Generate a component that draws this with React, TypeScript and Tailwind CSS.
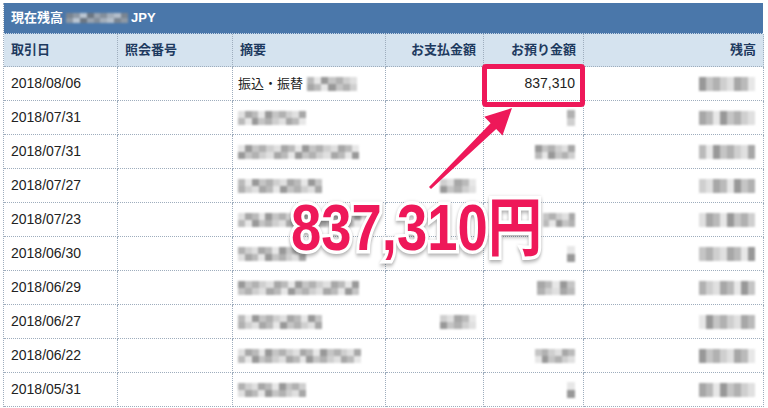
import React from "react";

const GRAYS = ["#8a8a8a", "#a4a4a4", "#c0c0c0", "#d6d6d6", "#b2b2b2", "#979797", "#e0e0e0", "#767676"];

function Blur({ w, seed = 1, h = 14 }: { w: number; seed?: number; h?: number }) {
  const cols = Math.max(1, Math.round(w / 7));
  const cells: string[] = [];
  let s = seed * 9301 + 49297;
  for (let i = 0; i < cols * 2; i++) {
    s = (s * 9301 + 49297) % 233280;
    cells.push(GRAYS[s % GRAYS.length]);
  }
  return (
    <div className="inline-grid blur-[1px] opacity-75" style={{ width: w, height: h, gridTemplateColumns: `repeat(${cols}, 1fr)` }}>
      {cells.map((c, i) => (
        <div key={i} style={{ background: c }} />
      ))}
    </div>
  );
}

type Row = {
  date: string;
  desc: React.ReactNode;
  pay?: number;
  dep?: React.ReactNode;
  bal: number;
};

const rows: Row[] = [
  { date: "2018/08/06", desc: (<span className="flex items-center gap-[4px]">振込・振替<Blur w={50} seed={3} /></span>), dep: <span>837,310</span>, bal: 3 },
  { date: "2018/07/31", desc: <Blur w={68} seed={5} />, dep: <Blur w={8} seed={7} h={16} />, bal: 4 },
  { date: "2018/07/31", desc: <Blur w={121} seed={8} />, dep: <Blur w={40} seed={9} />, bal: 5 },
  { date: "2018/07/27", desc: <Blur w={84} seed={11} />, pay: 12, bal: 6 },
  { date: "2018/07/23", desc: <Blur w={123} seed={13} />, dep: <Blur w={32} seed={14} />, bal: 7 },
  { date: "2018/06/30", desc: <Blur w={68} seed={15} />, dep: <Blur w={8} seed={16} h={16} />, bal: 8 },
  { date: "2018/06/29", desc: <Blur w={121} seed={17} />, dep: <Blur w={38} seed={18} />, bal: 9 },
  { date: "2018/06/27", desc: <Blur w={84} seed={19} />, pay: 20, bal: 10 },
  { date: "2018/06/22", desc: <Blur w={123} seed={21} />, dep: <Blur w={40} seed={22} />, bal: 11 },
  { date: "2018/05/31", desc: <Blur w={68} seed={23} />, dep: <Blur w={8} seed={24} h={16} />, bal: 12 },
];

const cell = "border-r border-b border-dotted border-[#9eadbd] flex items-center";

export default function App() {
  return (
    <div className="relative w-[768px] h-[408px] overflow-hidden bg-white pl-[3px] pt-[3px] font-['Liberation_Sans','Noto_Sans_CJK_JP',sans-serif]">
      <div className="w-[760px] border-l border-dotted border-[#9eadbd]">
        <div className="h-[31px] bg-[#4a77aa] border-b border-dotted border-[#c7d6e6] flex items-center pl-[7px] text-white font-bold text-[13px] gap-[3px]">
          <span>現在残高</span>
          <Blur w={62} seed={2} h={10} />
          <span>JPY</span>
        </div>
        <div className="grid grid-cols-[114px_115px_153px_98px_100px_180px]">
          {[
            ["取引日", "justify-start"],
            ["照会番号", "justify-start"],
            ["摘要", "justify-start"],
            ["お支払金額", "justify-end"],
            ["お預り金額", "justify-end"],
            ["残高", "justify-end"],
          ].map(([t, j], i) => (
            <div key={i} className={`${cell} ${j} h-[33px] bg-[#d5e3ef] px-[7px] text-[13px] font-bold text-[#1e3a5f]`}>
              {t}
            </div>
          ))}
          {rows.map((r, i) => (
            <React.Fragment key={i}>
              <div className={`${cell} h-[34px] px-[7px] text-[14px] text-[#222]`}>{r.date}</div>
              <div className={`${cell} h-[34px]`} />
              <div className={`${cell} h-[34px] px-[5px] text-[13px] text-[#222]`}>{r.desc}</div>
              <div className={`${cell} h-[34px] justify-end px-[7px]`}>{r.pay ? <Blur w={36} seed={r.pay} /> : null}</div>
              <div className={`${cell} h-[34px] justify-end px-[8px] text-[14px] text-[#222]`}>{r.dep}</div>
              <div className={`${cell} h-[34px] justify-end px-[8px]`}>
                <Blur w={56} seed={r.bal + 30} />
              </div>
            </React.Fragment>
          ))}
        </div>
      </div>

      <div className="absolute left-[482px] top-[64px] w-[103px] h-[43px] border-[5px] border-[#ee1859] rounded-[4px]" />

      <svg className="absolute left-0 top-0 pointer-events-none" width="768" height="408" viewBox="0 0 768 408">
        <polygon
          points="429,186.9 490.6,123.2 484.3,116.8 512,108 502.5,135.4 496.2,129 431,189.1"
          fill="#ee1859"
        />
      </svg>

      <div className="absolute left-[291px] top-[196px] origin-left scale-x-[0.85] whitespace-nowrap text-[64px] leading-none font-bold text-[#ee1859] font-['Liberation_Sans','Noto_Sans_CJK_JP',sans-serif] [paint-order:stroke_fill] [-webkit-text-stroke:7px_#fff] drop-shadow-[0_2px_2px_rgba(0,0,0,0.35)]">
        837,310円
      </div>
    </div>
  );
}
